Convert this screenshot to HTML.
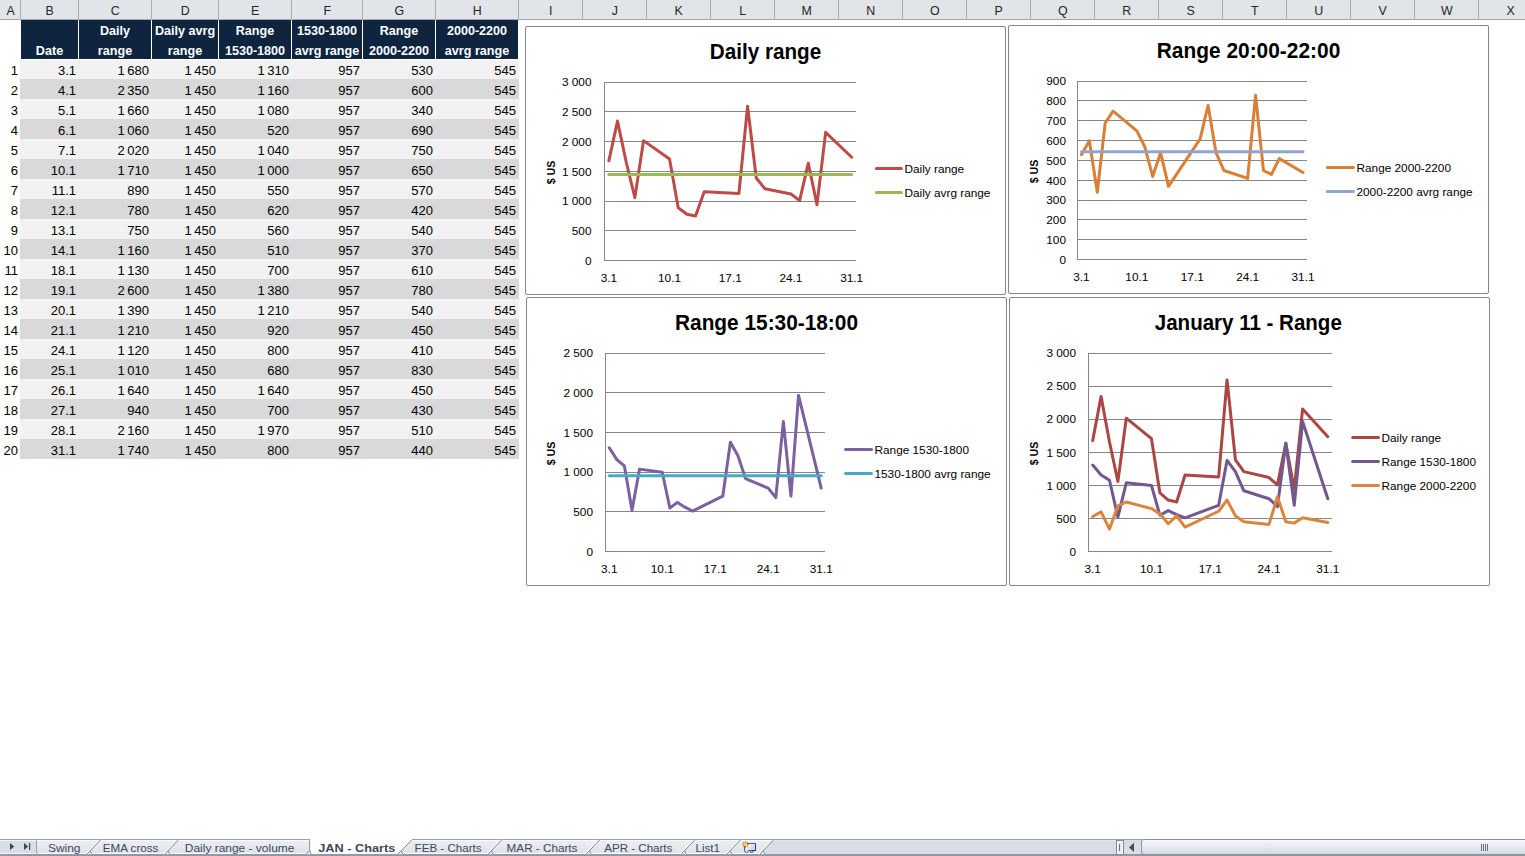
<!DOCTYPE html><html><head><meta charset="utf-8"><title>JAN - Charts</title><style>
*{box-sizing:border-box}
html,body{margin:0;padding:0}
body{width:1525px;height:856px;overflow:hidden;background:#fff;position:relative;font-family:"Liberation Sans", sans-serif;color:#000}
#colhdr{position:absolute;left:0;top:0;width:1525px;height:20px;background:#e1e4e9;border-bottom:1px solid #a3a8b0}
#colhdr div{position:absolute;top:0;height:19px;border-right:1px solid #a9adb4;text-align:center;font-size:12.4px;line-height:22px;color:#262626;padding-left:1.5px}
.hc{position:absolute;top:20px;height:39px;background:#0f243e;color:#fff;font-weight:bold;font-size:12.6px;text-align:center;line-height:20px;display:flex;flex-direction:column;justify-content:flex-end;white-space:nowrap}
.hc span{display:block;height:20px;position:relative;top:2px}
.band{position:absolute;left:20px;width:499px;height:20px}
.rn{position:absolute;left:0;width:18px;text-align:right;font-size:13px;line-height:20px;height:20px;padding-top:2px}
.c{position:absolute;text-align:right;font-size:13px;line-height:20px;height:22px;padding-top:2px;padding-right:2px;white-space:nowrap;word-spacing:-1.1px}
.chart{position:absolute;border:1px solid #868686;border-radius:2px;background:#fff}
.chart svg{position:absolute;left:-1px;top:-1px}
svg text{font-family:"Liberation Sans", sans-serif}
#tabs{position:absolute;left:0;top:839px;width:1525px;height:17px}
</style></head><body>
<div id="colhdr">
<div style="left:0px;width:21px">A</div>
<div style="left:20px;width:59px">B</div>
<div style="left:78px;width:74px">C</div>
<div style="left:151px;width:68px">D</div>
<div style="left:218px;width:74px">E</div>
<div style="left:291px;width:72px">F</div>
<div style="left:362px;width:74px">G</div>
<div style="left:435px;width:84px">H</div>
<div style="left:518px;width:65px">I</div>
<div style="left:582px;width:65px">J</div>
<div style="left:646px;width:65px">K</div>
<div style="left:710px;width:65px">L</div>
<div style="left:774px;width:65px">M</div>
<div style="left:838px;width:65px">N</div>
<div style="left:902px;width:65px">O</div>
<div style="left:966px;width:65px">P</div>
<div style="left:1030px;width:65px">Q</div>
<div style="left:1094px;width:65px">R</div>
<div style="left:1158px;width:65px">S</div>
<div style="left:1222px;width:65px">T</div>
<div style="left:1286px;width:65px">U</div>
<div style="left:1350px;width:65px">V</div>
<div style="left:1414px;width:65px">W</div>
<div style="left:1478px;width:65px">X</div>
</div>
<div class="hc" style="left:21px;width:57px"><span>Date</span></div>
<div class="hc" style="left:79px;width:72px"><span>Daily</span><span>range</span></div>
<div class="hc" style="left:152px;width:66px"><span>Daily avrg</span><span>range</span></div>
<div class="hc" style="left:219px;width:72px"><span>Range</span><span>1530-1800</span></div>
<div class="hc" style="left:292px;width:70px"><span>1530-1800</span><span>avrg range</span></div>
<div class="hc" style="left:363px;width:72px"><span>Range</span><span>2000-2200</span></div>
<div class="hc" style="left:436px;width:82px"><span>2000-2200</span><span>avrg range</span></div>
<div class="band" style="top:60px;height:19px;background:#f2f2f2"></div>
<div class="rn" style="top:59px">1</div>
<div class="c" style="left:20px;width:58px;top:59px">3.1</div>
<div class="c" style="left:78px;width:73px;top:59px">1 680</div>
<div class="c" style="left:151px;width:67px;top:59px">1 450</div>
<div class="c" style="left:218px;width:73px;top:59px">1 310</div>
<div class="c" style="left:291px;width:71px;top:59px">957</div>
<div class="c" style="left:362px;width:73px;top:59px">530</div>
<div class="c" style="left:435px;width:83px;top:59px">545</div>
<div class="band" style="top:79px;background:#d9d9d9"></div>
<div class="rn" style="top:79px">2</div>
<div class="c" style="left:20px;width:58px;top:79px">4.1</div>
<div class="c" style="left:78px;width:73px;top:79px">2 350</div>
<div class="c" style="left:151px;width:67px;top:79px">1 450</div>
<div class="c" style="left:218px;width:73px;top:79px">1 160</div>
<div class="c" style="left:291px;width:71px;top:79px">957</div>
<div class="c" style="left:362px;width:73px;top:79px">600</div>
<div class="c" style="left:435px;width:83px;top:79px">545</div>
<div class="band" style="top:99px;background:#f2f2f2"></div>
<div class="rn" style="top:99px">3</div>
<div class="c" style="left:20px;width:58px;top:99px">5.1</div>
<div class="c" style="left:78px;width:73px;top:99px">1 660</div>
<div class="c" style="left:151px;width:67px;top:99px">1 450</div>
<div class="c" style="left:218px;width:73px;top:99px">1 080</div>
<div class="c" style="left:291px;width:71px;top:99px">957</div>
<div class="c" style="left:362px;width:73px;top:99px">340</div>
<div class="c" style="left:435px;width:83px;top:99px">545</div>
<div class="band" style="top:119px;background:#d9d9d9"></div>
<div class="rn" style="top:119px">4</div>
<div class="c" style="left:20px;width:58px;top:119px">6.1</div>
<div class="c" style="left:78px;width:73px;top:119px">1 060</div>
<div class="c" style="left:151px;width:67px;top:119px">1 450</div>
<div class="c" style="left:218px;width:73px;top:119px">520</div>
<div class="c" style="left:291px;width:71px;top:119px">957</div>
<div class="c" style="left:362px;width:73px;top:119px">690</div>
<div class="c" style="left:435px;width:83px;top:119px">545</div>
<div class="band" style="top:139px;background:#f2f2f2"></div>
<div class="rn" style="top:139px">5</div>
<div class="c" style="left:20px;width:58px;top:139px">7.1</div>
<div class="c" style="left:78px;width:73px;top:139px">2 020</div>
<div class="c" style="left:151px;width:67px;top:139px">1 450</div>
<div class="c" style="left:218px;width:73px;top:139px">1 040</div>
<div class="c" style="left:291px;width:71px;top:139px">957</div>
<div class="c" style="left:362px;width:73px;top:139px">750</div>
<div class="c" style="left:435px;width:83px;top:139px">545</div>
<div class="band" style="top:159px;background:#d9d9d9"></div>
<div class="rn" style="top:159px">6</div>
<div class="c" style="left:20px;width:58px;top:159px">10.1</div>
<div class="c" style="left:78px;width:73px;top:159px">1 710</div>
<div class="c" style="left:151px;width:67px;top:159px">1 450</div>
<div class="c" style="left:218px;width:73px;top:159px">1 000</div>
<div class="c" style="left:291px;width:71px;top:159px">957</div>
<div class="c" style="left:362px;width:73px;top:159px">650</div>
<div class="c" style="left:435px;width:83px;top:159px">545</div>
<div class="band" style="top:179px;background:#f2f2f2"></div>
<div class="rn" style="top:179px">7</div>
<div class="c" style="left:20px;width:58px;top:179px">11.1</div>
<div class="c" style="left:78px;width:73px;top:179px">890</div>
<div class="c" style="left:151px;width:67px;top:179px">1 450</div>
<div class="c" style="left:218px;width:73px;top:179px">550</div>
<div class="c" style="left:291px;width:71px;top:179px">957</div>
<div class="c" style="left:362px;width:73px;top:179px">570</div>
<div class="c" style="left:435px;width:83px;top:179px">545</div>
<div class="band" style="top:199px;background:#d9d9d9"></div>
<div class="rn" style="top:199px">8</div>
<div class="c" style="left:20px;width:58px;top:199px">12.1</div>
<div class="c" style="left:78px;width:73px;top:199px">780</div>
<div class="c" style="left:151px;width:67px;top:199px">1 450</div>
<div class="c" style="left:218px;width:73px;top:199px">620</div>
<div class="c" style="left:291px;width:71px;top:199px">957</div>
<div class="c" style="left:362px;width:73px;top:199px">420</div>
<div class="c" style="left:435px;width:83px;top:199px">545</div>
<div class="band" style="top:219px;background:#f2f2f2"></div>
<div class="rn" style="top:219px">9</div>
<div class="c" style="left:20px;width:58px;top:219px">13.1</div>
<div class="c" style="left:78px;width:73px;top:219px">750</div>
<div class="c" style="left:151px;width:67px;top:219px">1 450</div>
<div class="c" style="left:218px;width:73px;top:219px">560</div>
<div class="c" style="left:291px;width:71px;top:219px">957</div>
<div class="c" style="left:362px;width:73px;top:219px">540</div>
<div class="c" style="left:435px;width:83px;top:219px">545</div>
<div class="band" style="top:239px;background:#d9d9d9"></div>
<div class="rn" style="top:239px">10</div>
<div class="c" style="left:20px;width:58px;top:239px">14.1</div>
<div class="c" style="left:78px;width:73px;top:239px">1 160</div>
<div class="c" style="left:151px;width:67px;top:239px">1 450</div>
<div class="c" style="left:218px;width:73px;top:239px">510</div>
<div class="c" style="left:291px;width:71px;top:239px">957</div>
<div class="c" style="left:362px;width:73px;top:239px">370</div>
<div class="c" style="left:435px;width:83px;top:239px">545</div>
<div class="band" style="top:259px;background:#f2f2f2"></div>
<div class="rn" style="top:259px">11</div>
<div class="c" style="left:20px;width:58px;top:259px">18.1</div>
<div class="c" style="left:78px;width:73px;top:259px">1 130</div>
<div class="c" style="left:151px;width:67px;top:259px">1 450</div>
<div class="c" style="left:218px;width:73px;top:259px">700</div>
<div class="c" style="left:291px;width:71px;top:259px">957</div>
<div class="c" style="left:362px;width:73px;top:259px">610</div>
<div class="c" style="left:435px;width:83px;top:259px">545</div>
<div class="band" style="top:279px;background:#d9d9d9"></div>
<div class="rn" style="top:279px">12</div>
<div class="c" style="left:20px;width:58px;top:279px">19.1</div>
<div class="c" style="left:78px;width:73px;top:279px">2 600</div>
<div class="c" style="left:151px;width:67px;top:279px">1 450</div>
<div class="c" style="left:218px;width:73px;top:279px">1 380</div>
<div class="c" style="left:291px;width:71px;top:279px">957</div>
<div class="c" style="left:362px;width:73px;top:279px">780</div>
<div class="c" style="left:435px;width:83px;top:279px">545</div>
<div class="band" style="top:299px;background:#f2f2f2"></div>
<div class="rn" style="top:299px">13</div>
<div class="c" style="left:20px;width:58px;top:299px">20.1</div>
<div class="c" style="left:78px;width:73px;top:299px">1 390</div>
<div class="c" style="left:151px;width:67px;top:299px">1 450</div>
<div class="c" style="left:218px;width:73px;top:299px">1 210</div>
<div class="c" style="left:291px;width:71px;top:299px">957</div>
<div class="c" style="left:362px;width:73px;top:299px">540</div>
<div class="c" style="left:435px;width:83px;top:299px">545</div>
<div class="band" style="top:319px;background:#d9d9d9"></div>
<div class="rn" style="top:319px">14</div>
<div class="c" style="left:20px;width:58px;top:319px">21.1</div>
<div class="c" style="left:78px;width:73px;top:319px">1 210</div>
<div class="c" style="left:151px;width:67px;top:319px">1 450</div>
<div class="c" style="left:218px;width:73px;top:319px">920</div>
<div class="c" style="left:291px;width:71px;top:319px">957</div>
<div class="c" style="left:362px;width:73px;top:319px">450</div>
<div class="c" style="left:435px;width:83px;top:319px">545</div>
<div class="band" style="top:339px;background:#f2f2f2"></div>
<div class="rn" style="top:339px">15</div>
<div class="c" style="left:20px;width:58px;top:339px">24.1</div>
<div class="c" style="left:78px;width:73px;top:339px">1 120</div>
<div class="c" style="left:151px;width:67px;top:339px">1 450</div>
<div class="c" style="left:218px;width:73px;top:339px">800</div>
<div class="c" style="left:291px;width:71px;top:339px">957</div>
<div class="c" style="left:362px;width:73px;top:339px">410</div>
<div class="c" style="left:435px;width:83px;top:339px">545</div>
<div class="band" style="top:359px;background:#d9d9d9"></div>
<div class="rn" style="top:359px">16</div>
<div class="c" style="left:20px;width:58px;top:359px">25.1</div>
<div class="c" style="left:78px;width:73px;top:359px">1 010</div>
<div class="c" style="left:151px;width:67px;top:359px">1 450</div>
<div class="c" style="left:218px;width:73px;top:359px">680</div>
<div class="c" style="left:291px;width:71px;top:359px">957</div>
<div class="c" style="left:362px;width:73px;top:359px">830</div>
<div class="c" style="left:435px;width:83px;top:359px">545</div>
<div class="band" style="top:379px;background:#f2f2f2"></div>
<div class="rn" style="top:379px">17</div>
<div class="c" style="left:20px;width:58px;top:379px">26.1</div>
<div class="c" style="left:78px;width:73px;top:379px">1 640</div>
<div class="c" style="left:151px;width:67px;top:379px">1 450</div>
<div class="c" style="left:218px;width:73px;top:379px">1 640</div>
<div class="c" style="left:291px;width:71px;top:379px">957</div>
<div class="c" style="left:362px;width:73px;top:379px">450</div>
<div class="c" style="left:435px;width:83px;top:379px">545</div>
<div class="band" style="top:399px;background:#d9d9d9"></div>
<div class="rn" style="top:399px">18</div>
<div class="c" style="left:20px;width:58px;top:399px">27.1</div>
<div class="c" style="left:78px;width:73px;top:399px">940</div>
<div class="c" style="left:151px;width:67px;top:399px">1 450</div>
<div class="c" style="left:218px;width:73px;top:399px">700</div>
<div class="c" style="left:291px;width:71px;top:399px">957</div>
<div class="c" style="left:362px;width:73px;top:399px">430</div>
<div class="c" style="left:435px;width:83px;top:399px">545</div>
<div class="band" style="top:419px;background:#f2f2f2"></div>
<div class="rn" style="top:419px">19</div>
<div class="c" style="left:20px;width:58px;top:419px">28.1</div>
<div class="c" style="left:78px;width:73px;top:419px">2 160</div>
<div class="c" style="left:151px;width:67px;top:419px">1 450</div>
<div class="c" style="left:218px;width:73px;top:419px">1 970</div>
<div class="c" style="left:291px;width:71px;top:419px">957</div>
<div class="c" style="left:362px;width:73px;top:419px">510</div>
<div class="c" style="left:435px;width:83px;top:419px">545</div>
<div class="band" style="top:439px;background:#d9d9d9"></div>
<div class="rn" style="top:439px">20</div>
<div class="c" style="left:20px;width:58px;top:439px">31.1</div>
<div class="c" style="left:78px;width:73px;top:439px">1 740</div>
<div class="c" style="left:151px;width:67px;top:439px">1 450</div>
<div class="c" style="left:218px;width:73px;top:439px">800</div>
<div class="c" style="left:291px;width:71px;top:439px">957</div>
<div class="c" style="left:362px;width:73px;top:439px">440</div>
<div class="c" style="left:435px;width:83px;top:439px">545</div>
<div class="chart" style="left:525px;top:26px;width:481px;height:269px"><svg width="481" height="269" viewBox="525 26 481 269"><line x1="604" x2="856" y1="260.5" y2="260.5" stroke="#868686" stroke-width="1"/><text x="591.5" y="265" font-size="11.8" text-anchor="end" fill="#000">0</text><line x1="604" x2="856" y1="230.5" y2="230.5" stroke="#868686" stroke-width="1"/><text x="591.5" y="235" font-size="11.8" text-anchor="end" fill="#000">500</text><line x1="604" x2="856" y1="201.5" y2="201.5" stroke="#868686" stroke-width="1"/><text x="591.5" y="205" font-size="11.8" text-anchor="end" fill="#000">1 000</text><line x1="604" x2="856" y1="171.5" y2="171.5" stroke="#868686" stroke-width="1"/><text x="591.5" y="176" font-size="11.8" text-anchor="end" fill="#000">1 500</text><line x1="604" x2="856" y1="141.5" y2="141.5" stroke="#868686" stroke-width="1"/><text x="591.5" y="146" font-size="11.8" text-anchor="end" fill="#000">2 000</text><line x1="604" x2="856" y1="111.5" y2="111.5" stroke="#868686" stroke-width="1"/><text x="591.5" y="116" font-size="11.8" text-anchor="end" fill="#000">2 500</text><line x1="604" x2="856" y1="82.5" y2="82.5" stroke="#868686" stroke-width="1"/><text x="591.5" y="86" font-size="11.8" text-anchor="end" fill="#000">3 000</text><line x1="604.5" x2="604.5" y1="82" y2="261" stroke="#868686" stroke-width="1"/><text x="608.84" y="282" font-size="11.8" text-anchor="middle" fill="#000">3.1</text><text x="669.54" y="282" font-size="11.8" text-anchor="middle" fill="#000">10.1</text><text x="730.25" y="282" font-size="11.8" text-anchor="middle" fill="#000">17.1</text><text x="790.96" y="282" font-size="11.8" text-anchor="middle" fill="#000">24.1</text><text x="851.66" y="282" font-size="11.8" text-anchor="middle" fill="#000">31.1</text><polyline points="608.84,160.82 617.51,121.07 626.18,162.01 634.85,197.61 643.53,140.65 669.54,159.04 678.22,207.69 686.89,214.22 695.56,216.00 704.23,191.67 738.92,193.45 747.59,106.23 756.27,178.03 764.94,188.71 790.96,194.05 799.63,200.57 808.30,163.19 816.97,204.73 825.65,132.34 851.66,157.26" fill="none" stroke="#be4b48" stroke-width="3" stroke-linecap="round" stroke-linejoin="round"/><polyline points="608.84,174.47 617.51,174.47 626.18,174.47 634.85,174.47 643.53,174.47 669.54,174.47 678.22,174.47 686.89,174.47 695.56,174.47 704.23,174.47 738.92,174.47 747.59,174.47 756.27,174.47 764.94,174.47 790.96,174.47 799.63,174.47 808.30,174.47 816.97,174.47 825.65,174.47 851.66,174.47" fill="none" stroke="#98b954" stroke-width="3" stroke-linecap="round" stroke-linejoin="round"/><text x="765.5" y="58.7" font-size="21.6" font-weight="bold" text-anchor="middle" textLength="111.4" lengthAdjust="spacingAndGlyphs" fill="#000">Daily range</text><text transform="translate(555,172.5) rotate(-90)" font-size="11.8" font-weight="bold" text-anchor="middle" textLength="23.6" lengthAdjust="spacingAndGlyphs" fill="#000">$ US</text><line x1="876.4" x2="901.4" y1="168.5" y2="168.5" stroke="#be4b48" stroke-width="3" stroke-linecap="round"/><text x="904.5" y="172.5" font-size="11.8" fill="#000">Daily range</text><line x1="876.4" x2="901.4" y1="192.5" y2="192.5" stroke="#98b954" stroke-width="3" stroke-linecap="round"/><text x="904.5" y="196.5" font-size="11.8" fill="#000">Daily avrg range</text></svg></div>
<div class="chart" style="left:1008px;top:25px;width:481px;height:269px"><svg width="481" height="269" viewBox="1008 25 481 269"><line x1="1077" x2="1307" y1="259.5" y2="259.5" stroke="#868686" stroke-width="1"/><text x="1066" y="264" font-size="11.8" text-anchor="end" fill="#000">0</text><line x1="1077" x2="1307" y1="239.5" y2="239.5" stroke="#868686" stroke-width="1"/><text x="1066" y="244" font-size="11.8" text-anchor="end" fill="#000">100</text><line x1="1077" x2="1307" y1="219.5" y2="219.5" stroke="#868686" stroke-width="1"/><text x="1066" y="224" font-size="11.8" text-anchor="end" fill="#000">200</text><line x1="1077" x2="1307" y1="200.5" y2="200.5" stroke="#868686" stroke-width="1"/><text x="1066" y="204" font-size="11.8" text-anchor="end" fill="#000">300</text><line x1="1077" x2="1307" y1="180.5" y2="180.5" stroke="#868686" stroke-width="1"/><text x="1066" y="185" font-size="11.8" text-anchor="end" fill="#000">400</text><line x1="1077" x2="1307" y1="160.5" y2="160.5" stroke="#868686" stroke-width="1"/><text x="1066" y="165" font-size="11.8" text-anchor="end" fill="#000">500</text><line x1="1077" x2="1307" y1="140.5" y2="140.5" stroke="#868686" stroke-width="1"/><text x="1066" y="145" font-size="11.8" text-anchor="end" fill="#000">600</text><line x1="1077" x2="1307" y1="120.5" y2="120.5" stroke="#868686" stroke-width="1"/><text x="1066" y="125" font-size="11.8" text-anchor="end" fill="#000">700</text><line x1="1077" x2="1307" y1="100.5" y2="100.5" stroke="#868686" stroke-width="1"/><text x="1066" y="105" font-size="11.8" text-anchor="end" fill="#000">800</text><line x1="1077" x2="1307" y1="81.5" y2="81.5" stroke="#868686" stroke-width="1"/><text x="1066" y="85" font-size="11.8" text-anchor="end" fill="#000">900</text><line x1="1077.5" x2="1077.5" y1="81" y2="260" stroke="#868686" stroke-width="1"/><text x="1081.46" y="281" font-size="11.8" text-anchor="middle" fill="#000">3.1</text><text x="1136.85" y="281" font-size="11.8" text-anchor="middle" fill="#000">10.1</text><text x="1192.25" y="281" font-size="11.8" text-anchor="middle" fill="#000">17.1</text><text x="1247.65" y="281" font-size="11.8" text-anchor="middle" fill="#000">24.1</text><text x="1303.04" y="281" font-size="11.8" text-anchor="middle" fill="#000">31.1</text><polyline points="1081.46,154.68 1089.37,140.83 1097.28,192.26 1105.20,123.03 1113.11,111.17 1136.85,130.94 1144.77,146.77 1152.68,176.43 1160.59,152.70 1168.51,186.32 1200.16,138.86 1208.08,105.23 1215.99,152.70 1223.91,170.50 1247.65,178.41 1255.56,95.34 1263.47,170.50 1271.39,174.46 1279.30,158.63 1303.04,172.48" fill="none" stroke="#da7f34" stroke-width="3" stroke-linecap="round" stroke-linejoin="round"/><polyline points="1081.46,151.71 1089.37,151.71 1097.28,151.71 1105.20,151.71 1113.11,151.71 1136.85,151.71 1144.77,151.71 1152.68,151.71 1160.59,151.71 1168.51,151.71 1200.16,151.71 1208.08,151.71 1215.99,151.71 1223.91,151.71 1247.65,151.71 1255.56,151.71 1263.47,151.71 1271.39,151.71 1279.30,151.71 1303.04,151.71" fill="none" stroke="#8ea5cf" stroke-width="3" stroke-linecap="round" stroke-linejoin="round"/><text x="1248.5" y="57.7" font-size="21.6" font-weight="bold" text-anchor="middle" textLength="183.6" lengthAdjust="spacingAndGlyphs" fill="#000">Range 20:00-22:00</text><text transform="translate(1038,171.5) rotate(-90)" font-size="11.8" font-weight="bold" text-anchor="middle" textLength="23.6" lengthAdjust="spacingAndGlyphs" fill="#000">$ US</text><line x1="1327.4" x2="1353.4" y1="167.5" y2="167.5" stroke="#da7f34" stroke-width="3" stroke-linecap="round"/><text x="1356.5" y="171.5" font-size="11.8" fill="#000">Range 2000-2200</text><line x1="1327.4" x2="1353.4" y1="191.5" y2="191.5" stroke="#8ea5cf" stroke-width="3" stroke-linecap="round"/><text x="1356.5" y="195.5" font-size="11.8" fill="#000">2000-2200 avrg range</text></svg></div>
<div class="chart" style="left:526px;top:297px;width:481px;height:289px"><svg width="481" height="289" viewBox="526 297 481 289"><line x1="605" x2="825" y1="551.5" y2="551.5" stroke="#868686" stroke-width="1"/><text x="593" y="556" font-size="11.8" text-anchor="end" fill="#000">0</text><line x1="605" x2="825" y1="511.5" y2="511.5" stroke="#868686" stroke-width="1"/><text x="593" y="516" font-size="11.8" text-anchor="end" fill="#000">500</text><line x1="605" x2="825" y1="472.5" y2="472.5" stroke="#868686" stroke-width="1"/><text x="593" y="476" font-size="11.8" text-anchor="end" fill="#000">1 000</text><line x1="605" x2="825" y1="432.5" y2="432.5" stroke="#868686" stroke-width="1"/><text x="593" y="437" font-size="11.8" text-anchor="end" fill="#000">1 500</text><line x1="605" x2="825" y1="392.5" y2="392.5" stroke="#868686" stroke-width="1"/><text x="593" y="397" font-size="11.8" text-anchor="end" fill="#000">2 000</text><line x1="605" x2="825" y1="353.5" y2="353.5" stroke="#868686" stroke-width="1"/><text x="593" y="357" font-size="11.8" text-anchor="end" fill="#000">2 500</text><line x1="605.5" x2="605.5" y1="353" y2="552" stroke="#868686" stroke-width="1"/><text x="609.28" y="573" font-size="11.8" text-anchor="middle" fill="#000">3.1</text><text x="662.27" y="573" font-size="11.8" text-anchor="middle" fill="#000">10.1</text><text x="715.25" y="573" font-size="11.8" text-anchor="middle" fill="#000">17.1</text><text x="768.23" y="573" font-size="11.8" text-anchor="middle" fill="#000">24.1</text><text x="821.22" y="573" font-size="11.8" text-anchor="middle" fill="#000">31.1</text><polyline points="609.28,447.75 616.85,459.63 624.42,465.96 631.99,510.32 639.56,469.13 662.27,472.30 669.84,507.94 677.41,502.40 684.97,507.15 692.54,511.11 722.82,496.06 730.39,442.20 737.96,455.67 745.53,478.64 768.23,488.14 775.80,497.64 783.37,421.61 790.94,496.06 798.51,395.48 821.22,488.14" fill="none" stroke="#7d60a0" stroke-width="3" stroke-linecap="round" stroke-linejoin="round"/><polyline points="609.28,475.71 616.85,475.71 624.42,475.71 631.99,475.71 639.56,475.71 662.27,475.71 669.84,475.71 677.41,475.71 684.97,475.71 692.54,475.71 722.82,475.71 730.39,475.71 737.96,475.71 745.53,475.71 768.23,475.71 775.80,475.71 783.37,475.71 790.94,475.71 798.51,475.71 821.22,475.71" fill="none" stroke="#46aac5" stroke-width="3" stroke-linecap="round" stroke-linejoin="round"/><text x="766.5" y="329.6" font-size="21.6" font-weight="bold" text-anchor="middle" textLength="183" lengthAdjust="spacingAndGlyphs" fill="#000">Range 15:30-18:00</text><text transform="translate(555,453.5) rotate(-90)" font-size="11.8" font-weight="bold" text-anchor="middle" textLength="23.6" lengthAdjust="spacingAndGlyphs" fill="#000">$ US</text><line x1="845.5" x2="871.5" y1="449.5" y2="449.5" stroke="#7d60a0" stroke-width="3" stroke-linecap="round"/><text x="874.5" y="453.5" font-size="11.8" fill="#000">Range 1530-1800</text><line x1="845.5" x2="871.5" y1="473.5" y2="473.5" stroke="#46aac5" stroke-width="3" stroke-linecap="round"/><text x="874.5" y="477.5" font-size="11.8" fill="#000">1530-1800 avrg range</text></svg></div>
<div class="chart" style="left:1009px;top:297px;width:481px;height:289px"><svg width="481" height="289" viewBox="1009 297 481 289"><line x1="1088" x2="1332" y1="551.5" y2="551.5" stroke="#868686" stroke-width="1"/><text x="1076" y="556" font-size="11.8" text-anchor="end" fill="#000">0</text><line x1="1088" x2="1332" y1="518.5" y2="518.5" stroke="#868686" stroke-width="1"/><text x="1076" y="523" font-size="11.8" text-anchor="end" fill="#000">500</text><line x1="1088" x2="1332" y1="485.5" y2="485.5" stroke="#868686" stroke-width="1"/><text x="1076" y="490" font-size="11.8" text-anchor="end" fill="#000">1 000</text><line x1="1088" x2="1332" y1="452.5" y2="452.5" stroke="#868686" stroke-width="1"/><text x="1076" y="457" font-size="11.8" text-anchor="end" fill="#000">1 500</text><line x1="1088" x2="1332" y1="419.5" y2="419.5" stroke="#868686" stroke-width="1"/><text x="1076" y="423" font-size="11.8" text-anchor="end" fill="#000">2 000</text><line x1="1088" x2="1332" y1="386.5" y2="386.5" stroke="#868686" stroke-width="1"/><text x="1076" y="390" font-size="11.8" text-anchor="end" fill="#000">2 500</text><line x1="1088" x2="1332" y1="353.5" y2="353.5" stroke="#868686" stroke-width="1"/><text x="1076" y="357" font-size="11.8" text-anchor="end" fill="#000">3 000</text><line x1="1088.5" x2="1088.5" y1="353" y2="552" stroke="#868686" stroke-width="1"/><text x="1092.70" y="573" font-size="11.8" text-anchor="middle" fill="#000">3.1</text><text x="1151.47" y="573" font-size="11.8" text-anchor="middle" fill="#000">10.1</text><text x="1210.25" y="573" font-size="11.8" text-anchor="middle" fill="#000">17.1</text><text x="1269.03" y="573" font-size="11.8" text-anchor="middle" fill="#000">24.1</text><text x="1327.80" y="573" font-size="11.8" text-anchor="middle" fill="#000">31.1</text><polyline points="1092.70,440.62 1101.09,396.40 1109.49,441.94 1117.89,481.54 1126.28,418.18 1151.47,438.64 1159.87,492.76 1168.27,500.02 1176.66,502.00 1185.06,474.94 1218.65,476.92 1227.04,379.90 1235.44,459.76 1243.84,471.64 1269.03,477.58 1277.42,484.84 1285.82,443.26 1294.22,489.46 1302.61,408.94 1327.80,436.66" fill="none" stroke="#aa4643" stroke-width="3" stroke-linecap="round" stroke-linejoin="round"/><polyline points="1092.70,465.04 1101.09,474.94 1109.49,480.22 1117.89,517.18 1126.28,482.86 1151.47,485.50 1159.87,515.20 1168.27,510.58 1176.66,514.54 1185.06,517.84 1218.65,505.30 1227.04,460.42 1235.44,471.64 1243.84,490.78 1269.03,498.70 1277.42,506.62 1285.82,443.26 1294.22,505.30 1302.61,421.48 1327.80,498.70" fill="none" stroke="#71588f" stroke-width="3" stroke-linecap="round" stroke-linejoin="round"/><polyline points="1092.70,516.52 1101.09,511.90 1109.49,529.06 1117.89,505.96 1126.28,502.00 1151.47,508.60 1159.87,513.88 1168.27,523.78 1176.66,515.86 1185.06,527.08 1218.65,511.24 1227.04,500.02 1235.44,515.86 1243.84,521.80 1269.03,524.44 1277.42,496.72 1285.82,521.80 1294.22,523.12 1302.61,517.84 1327.80,522.46" fill="none" stroke="#db843d" stroke-width="3" stroke-linecap="round" stroke-linejoin="round"/><text x="1248.3" y="329.6" font-size="21.6" font-weight="bold" text-anchor="middle" textLength="187" lengthAdjust="spacingAndGlyphs" fill="#000">January 11 - Range</text><text transform="translate(1038,453.5) rotate(-90)" font-size="11.8" font-weight="bold" text-anchor="middle" textLength="23.6" lengthAdjust="spacingAndGlyphs" fill="#000">$ US</text><line x1="1352.7" x2="1378.5" y1="437.5" y2="437.5" stroke="#aa4643" stroke-width="3" stroke-linecap="round"/><text x="1381.5" y="441.5" font-size="11.8" fill="#000">Daily range</text><line x1="1352.7" x2="1378.5" y1="461.5" y2="461.5" stroke="#71588f" stroke-width="3" stroke-linecap="round"/><text x="1381.5" y="465.5" font-size="11.8" fill="#000">Range 1530-1800</text><line x1="1352.7" x2="1378.5" y1="485.5" y2="485.5" stroke="#db843d" stroke-width="3" stroke-linecap="round"/><text x="1381.5" y="489.5" font-size="11.8" fill="#000">Range 2000-2200</text></svg></div>
<svg id="tabs" width="1525" height="17" viewBox="0 839 1525 17"><defs><linearGradient id="tg" x1="0" y1="0" x2="0" y2="1"><stop offset="0" stop-color="#eceef2"/><stop offset="1" stop-color="#dfe2e8"/></linearGradient><linearGradient id="sg" x1="0" y1="0" x2="0" y2="1"><stop offset="0" stop-color="#f3f5f8"/><stop offset="0.5" stop-color="#e6e9ef"/><stop offset="1" stop-color="#d3d8e0"/></linearGradient><linearGradient id="ig" x1="0" y1="0" x2="1" y2="1"><stop offset="0" stop-color="#ffffff"/><stop offset="1" stop-color="#b9c6e2"/></linearGradient></defs><rect x="0" y="839" width="1525" height="17" fill="#d9dde6"/><rect x="0" y="840" width="37" height="1" fill="#f4f5f8"/><rect x="774" y="840" width="342" height="1" fill="#e4e7ed"/><rect x="0" y="853" width="37" height="1" fill="#f4f5f8"/><polygon points="37,840 773.5,840 760,854 37,854" fill="url(#tg)"/><rect x="37" y="840" width="737" height="1" fill="#f8f9fb"/><rect x="37" y="853" width="724" height="1" fill="#fbfbfd"/><polygon points="310,839 412.8,839 398,854 310,854" fill="#ffffff"/><rect x="0" y="839" width="310" height="1" fill="#9ca2ac"/><rect x="412.3" y="839" width="1112.7" height="1" fill="#9ca2ac"/><rect x="0" y="854" width="1525" height="2" fill="#9198a4"/><path d="M36.5,839 V852.5 Q36.5,854 38,854" fill="none" stroke="#9ca2ac" stroke-width="1"/><line x1="85.8" y1="854" x2="99.4" y2="839.8" stroke="#ffffff" stroke-width="1.1"/><polygon points="87.0,854.2 90.5,850.6 91.9,854.2" fill="#e9ecf1"/><line x1="87.0" y1="854.1" x2="100.7" y2="839.8" stroke="#7f858f" stroke-width="1"/><line x1="90.4" y1="850.6" x2="91.9" y2="854.1" stroke="#8d939d" stroke-width="1"/><line x1="163.60000000000002" y1="854" x2="177.20000000000002" y2="839.8" stroke="#ffffff" stroke-width="1.1"/><polygon points="164.8,854.2 168.3,850.6 169.70000000000002,854.2" fill="#e9ecf1"/><line x1="164.8" y1="854.1" x2="178.5" y2="839.8" stroke="#7f858f" stroke-width="1"/><line x1="168.20000000000002" y1="850.6" x2="169.70000000000002" y2="854.1" stroke="#8d939d" stroke-width="1"/><line x1="486.90000000000003" y1="854" x2="500.5" y2="839.8" stroke="#ffffff" stroke-width="1.1"/><polygon points="488.1,854.2 491.6,850.6 493.0,854.2" fill="#e9ecf1"/><line x1="488.1" y1="854.1" x2="501.8" y2="839.8" stroke="#7f858f" stroke-width="1"/><line x1="491.5" y1="850.6" x2="493.0" y2="854.1" stroke="#8d939d" stroke-width="1"/><line x1="584.9" y1="854" x2="598.5" y2="839.8" stroke="#ffffff" stroke-width="1.1"/><polygon points="586.1,854.2 589.6,850.6 591.0,854.2" fill="#e9ecf1"/><line x1="586.1" y1="854.1" x2="599.8000000000001" y2="839.8" stroke="#7f858f" stroke-width="1"/><line x1="589.5" y1="850.6" x2="591.0" y2="854.1" stroke="#8d939d" stroke-width="1"/><line x1="680.0" y1="854" x2="693.6" y2="839.8" stroke="#ffffff" stroke-width="1.1"/><polygon points="681.2,854.2 684.7,850.6 686.1,854.2" fill="#e9ecf1"/><line x1="681.2" y1="854.1" x2="694.9000000000001" y2="839.8" stroke="#7f858f" stroke-width="1"/><line x1="684.6" y1="850.6" x2="686.1" y2="854.1" stroke="#8d939d" stroke-width="1"/><line x1="725.6999999999999" y1="854" x2="739.3" y2="839.8" stroke="#ffffff" stroke-width="1.1"/><polygon points="726.9,854.2 730.4,850.6 731.8,854.2" fill="#e9ecf1"/><line x1="726.9" y1="854.1" x2="740.6" y2="839.8" stroke="#7f858f" stroke-width="1"/><line x1="730.3" y1="850.6" x2="731.8" y2="854.1" stroke="#8d939d" stroke-width="1"/><line x1="758.6999999999999" y1="854" x2="772.3" y2="839.8" stroke="#ffffff" stroke-width="1.1"/><polygon points="759.9,854.2 763.4,850.6 764.8,854.2" fill="#e9ecf1"/><line x1="759.9" y1="854.1" x2="773.6" y2="839.8" stroke="#7f858f" stroke-width="1"/><line x1="763.3" y1="850.6" x2="764.8" y2="854.1" stroke="#8d939d" stroke-width="1"/><rect x="309" y="839" width="1.2" height="13.5" fill="#9aa1ab"/><polygon points="306,854.2 309.5,850.8 311.2,854.2" fill="#e9ecf1"/><line x1="306" y1="854.1" x2="309.4" y2="850.8" stroke="#8d939d" stroke-width="1"/><line x1="309.7" y1="850.8" x2="311.2" y2="854.1" stroke="#8d939d" stroke-width="1"/><polygon points="397.9,854.2 401.4,850.6 402.8,854.2" fill="#e9ecf1"/><line x1="397.9" y1="854.1" x2="412.3" y2="839.4" stroke="#7f858f" stroke-width="1"/><line x1="401.3" y1="850.6" x2="402.8" y2="854.1" stroke="#8d939d" stroke-width="1"/><polygon points="10,843 14.2,846.5 10,850" fill="#3f4652"/><polygon points="24,843 28.2,846.5 24,850" fill="#3f4652"/><rect x="29" y="843" width="1.2" height="7" fill="#3f4652"/><text x="48.0" y="851.7" font-size="11.8" font-weight="normal" fill="#3c4761" textLength="32.4" lengthAdjust="spacingAndGlyphs">Swing</text><text x="102.8" y="851.7" font-size="11.8" font-weight="normal" fill="#3c4761" textLength="55.6" lengthAdjust="spacingAndGlyphs">EMA cross</text><text x="184.8" y="851.7" font-size="11.8" font-weight="normal" fill="#3c4761" textLength="109.6" lengthAdjust="spacingAndGlyphs">Daily range - volume</text><text x="318.2" y="851.7" font-size="11.8" font-weight="bold" fill="#3c4761" textLength="77.2" lengthAdjust="spacingAndGlyphs">JAN - Charts</text><text x="414.6" y="851.7" font-size="11.8" font-weight="normal" fill="#3c4761" textLength="67" lengthAdjust="spacingAndGlyphs">FEB - Charts</text><text x="506.6" y="851.7" font-size="11.8" font-weight="normal" fill="#3c4761" textLength="70.8" lengthAdjust="spacingAndGlyphs">MAR - Charts</text><text x="604.2" y="851.7" font-size="11.8" font-weight="normal" fill="#3c4761" textLength="68.2" lengthAdjust="spacingAndGlyphs">APR - Charts</text><text x="695.6" y="851.7" font-size="11.8" font-weight="normal" fill="#3c4761" textLength="24.4" lengthAdjust="spacingAndGlyphs">List1</text><path d="M745,843.5 H755.5 V850.5 H753.5 Q753.5,852.5 751.5,852.5 H750.5 V850.5 H748.5 Q748.5,852.5 746.5,852.5 Q744.5,852.5 744.5,850 V844 Z" fill="url(#ig)" stroke="#3f5f9e" stroke-width="1"/><path d="M755.5,843.5 V850.5 H751" fill="none" stroke="#27406f" stroke-width="1"/><line x1="745.5" y1="844.5" x2="748.90" y2="844.50" stroke="#d98a17" stroke-width="1.1"/><line x1="745.5" y1="844.5" x2="747.90" y2="846.90" stroke="#d98a17" stroke-width="1.1"/><line x1="745.5" y1="844.5" x2="745.50" y2="847.90" stroke="#d98a17" stroke-width="1.1"/><line x1="745.5" y1="844.5" x2="743.10" y2="846.90" stroke="#d98a17" stroke-width="1.1"/><line x1="745.5" y1="844.5" x2="742.10" y2="844.50" stroke="#d98a17" stroke-width="1.1"/><line x1="745.5" y1="844.5" x2="743.10" y2="842.10" stroke="#d98a17" stroke-width="1.1"/><line x1="745.5" y1="844.5" x2="745.50" y2="841.10" stroke="#d98a17" stroke-width="1.1"/><line x1="745.5" y1="844.5" x2="747.90" y2="842.10" stroke="#d98a17" stroke-width="1.1"/><circle cx="745.5" cy="844.5" r="1.3" fill="#fff6c8"/><rect x="1116.5" y="840.5" width="7" height="14" fill="#ffffff" stroke="#858a92" stroke-width="1"/><rect x="1118" y="842" width="4" height="11" fill="#e6eaf6"/><rect x="1119" y="844" width="1" height="7" fill="#6f737c"/><polygon points="1129,847.4 1134,842.8 1134,852" fill="#484c54"/><path d="M1525,839.5 H1144 Q1141.5,839.5 1141.5,842 V852 Q1141.5,854.5 1144,854.5 H1525" fill="url(#sg)" stroke="#8a909a" stroke-width="1"/><rect x="1143" y="840.5" width="382" height="1" fill="#fafbfc"/><rect x="1481" y="844" width="1" height="7" fill="#6d717a"/><rect x="1483" y="844" width="1" height="7" fill="#6d717a"/><rect x="1485" y="844" width="1" height="7" fill="#6d717a"/><rect x="1487" y="844" width="1" height="7" fill="#6d717a"/><rect x="1141" y="854.6" width="384" height="1.4" fill="#9198a4"/></svg>
</body></html>
